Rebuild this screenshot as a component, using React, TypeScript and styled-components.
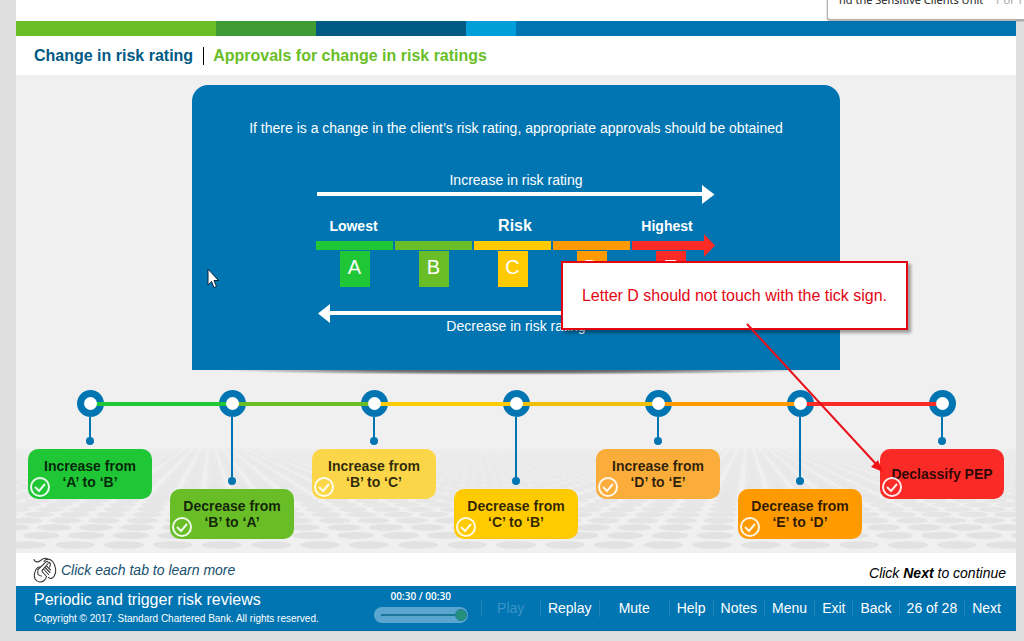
import React from 'react';
import styled, { createGlobalStyle } from 'styled-components';

const blue = '#0075b2';
const sans = '"Liberation Sans", Arial, sans-serif';

const GlobalStyle = createGlobalStyle`
  *, *::before, *::after { box-sizing: border-box; }
  body { margin: 0; background: #dedddf; font-family: ${sans}; overflow-x: hidden; }
  button { font: inherit; border: 0; padding: 0; background: none; color: inherit; cursor: pointer; }
  h1, h2, p { margin: 0; }
`;

const Page = styled.div`
  position: relative;
  padding: 0 8px 10px 16px;
  background: #dedede;
  overflow: hidden;
`;

const Course = styled.main`
  background: #fff;
  padding-top: 21px;
`;

const FindBar = styled.div`
  position: absolute;
  top: -12px;
  right: 0;
  z-index: 2;
  width: 197px;
  height: 32px;
  padding: 1px 0 0 11px;
  background: #fff;
  border: 1px solid #b0b0b0;
  border-right: 0;
  border-radius: 0 0 0 3px;
  box-shadow: 0 1px 2px rgba(0, 0, 0, 0.35);
  font: 11px/20px "Noto Sans", sans-serif;
  color: #222;
  white-space: nowrap;
  overflow: hidden;
`;

const MatchCount = styled.span`
  margin-left: 11px;
  color: #a5a5a5;
`;

const Stripe = styled.div`
  display: flex;
  height: 15px;
  background: ${blue};
`;

const StripePart = styled.span<{ $width: number; $color: string }>`
  width: ${p => p.$width}%;
  background: ${p => p.$color};
`;

const Header = styled.header`
  display: flex;
  align-items: center;
  height: 39px;
  padding: 0 18px;
`;

const Title = styled.h1`
  font-size: 16px;
  line-height: 18px;
  color: #005a84;
`;

const Subtitle = styled.h2`
  margin-left: 10px;
  padding-left: 9px;
  border-left: 1px solid #000;
  font-size: 16px;
  line-height: 18px;
  color: #69be28;
`;

const Stage = styled.section`
  position: relative;
  display: grid;
  background: #f0f0f0;
`;

const Floor = styled.svg`
  grid-area: 1 / 1;
  align-self: end;
  display: block;
  width: 100%;
  height: 120px;
`;

const StageContent = styled.div`
  grid-area: 1 / 1;
  min-width: 0;
  padding: 10px 3px 14px;
`;

const Panel = styled.section`
  display: flex;
  flex-direction: column;
  align-items: center;
  max-width: 648px;
  margin: 0 auto;
  padding: 35px 16px 36px;
  border-radius: 16px 16px 0 0;
  background: ${blue};
  color: #fff;
  font-size: 14px;
  line-height: 16px;
`;

const PanelShadow = styled.div`
  max-width: 648px;
  height: 5px;
  margin: 0 auto 15px;
  background: radial-gradient(ellipse 46% 100% at 50% 0, #555 0, #777 50%, rgba(160, 160, 160, 0) 100%);
`;

const Scale = styled.div`
  width: 400px;
  margin-top: 36px;
  text-align: center;
`;

const ArrowSvg = styled.svg<{ $top: number }>`
  display: block;
  width: 400px;
  height: 8px;
  margin-top: ${p => p.$top}px;
  overflow: visible;
`;

const ScaleLabels = styled.div`
  display: grid;
  grid-template-columns: 75px 248px 56px;
  align-items: baseline;
  height: 16px;
  margin-top: 20px;
  font-weight: bold;
`;

const RiskLabel = styled.span`
  font-size: 16px;
`;

const Grades = styled.div`
  display: grid;
  grid-template-columns: repeat(5, 77px);
  gap: 2px;
  margin-top: 7px;
`;

const Grade = styled.div`
  display: flex;
  flex-direction: column;
  align-items: center;
  gap: 1px;
`;

const GradeBar = styled.span<{ $color: string }>`
  width: 100%;
  height: 9px;
  background: ${p => p.$color};
`;

const GradeArrow = styled.svg`
  display: block;
  width: 100%;
  height: 9px;
  overflow: visible;
`;

const Letter = styled.span<{ $color: string }>`
  width: 30px;
  height: 36px;
  background: ${p => p.$color};
  font-size: 20px;
  line-height: 32px;
`;

const Timeline = styled.ol`
  display: grid;
  grid-template-columns: repeat(7, 1fr);
  align-items: start;
  margin: 0;
  padding: 0;
  list-style: none;
`;

const Step = styled.li`
  display: flex;
  flex-direction: column;
  align-items: center;
`;

const Node = styled.div`
  display: grid;
  place-items: center;
  width: 100%;
  > * { grid-area: 1 / 1; }
`;

const Ring = styled.span`
  width: 27px;
  height: 27px;
  border-radius: 50%;
  background: ${blue};
`;

const Rail = styled.span<{ $before: string; $after: string }>`
  width: 100%;
  height: 4px;
  background: linear-gradient(90deg, ${p => p.$before} 50%, ${p => p.$after} 50%);
`;

const Hole = styled.span`
  width: 13px;
  height: 13px;
  border-radius: 50%;
  background: #fff;
`;

const Stem = styled.span<{ $long: boolean }>`
  width: 2px;
  height: ${p => (p.$long ? 60 : 20)}px;
  background: ${blue};
`;

const StemDot = styled.span`
  width: 8px;
  height: 8px;
  margin-bottom: 4px;
  border-radius: 50%;
  background: ${blue};
`;

const Card = styled.button<{ $color: string }>`
  position: relative;
  width: 124px;
  height: 50px;
  border-radius: 10px;
  background: ${p => p.$color};
  color: rgba(0, 0, 0, 0.82);
  font-size: 14px;
  font-weight: bold;
  line-height: 16px;
  white-space: pre-line;
`;

const Tick = styled.svg`
  position: absolute;
  left: 2px;
  bottom: 2px;
  width: 20px;
  height: 20px;
`;

const Callout = styled.aside`
  position: absolute;
  top: 186px;
  left: calc(50% + 45px);
  width: 347px;
  padding: 24px 0 23px;
  border: 2px solid #e30613;
  background: #fff;
  box-shadow: 3px 3px 3px rgba(0, 0, 0, 0.35);
  color: #e30613;
  font-size: 16px;
  line-height: 18px;
  text-align: center;
`;

const Leader = styled.svg`
  position: absolute;
  top: 248px;
  left: calc(50% + 230px);
  width: 138px;
  height: 150px;
  pointer-events: none;
`;

const Pointer = styled.svg`
  position: absolute;
  top: 193px;
  left: calc(50% - 310px);
  width: 14px;
  height: 21px;
`;

const Hints = styled.div`
  display: flex;
  align-items: center;
  justify-content: space-between;
  height: 33px;
  padding: 0 10px 0 17px;
  font-size: 14px;
  font-style: italic;
`;

const Hint = styled.p`
  display: flex;
  align-items: center;
  gap: 4px;
  color: #17506f;
`;

const NextHint = styled.p`
  padding-top: 6px;
  color: #000;
`;

const Footer = styled.footer`
  display: flex;
  align-items: center;
  height: 45px;
  padding: 0 8px 0 18px;
  border-bottom: 1px solid #006aa6;
  background: ${blue};
  color: #fff;
`;

const Credits = styled.div`
  flex: 1;
  padding-top: 2px;
  font-size: 10px;
  line-height: 18px;
  white-space: nowrap;
`;

const CourseName = styled.p`
  font-size: 16px;
  line-height: 20px;
`;

const Seek = styled.label`
  display: flex;
  flex-direction: column;
  align-items: center;
  gap: 5px;
  width: 94px;
  margin: 0 13px 3px 0;
  font: 600 10px/12px "Open Sans", sans-serif;
`;

const SeekBar = styled.input`
  appearance: none;
  display: block;
  width: 94px;
  height: 16px;
  margin: 0;
  padding: 0 1px 0 7px;
  border-radius: 8px;
  background: #5ba6d1;
  &::-webkit-slider-runnable-track {
    height: 2px;
    background: #1b7797;
  }
  &::-webkit-slider-thumb {
    appearance: none;
    width: 12px;
    height: 12px;
    margin-top: -5px;
    border: 1px solid #1c7f93;
    border-radius: 50%;
    background: #27907c;
  }
`;

const Nav = styled.nav`
  display: flex;
  font-size: 14px;
  line-height: 17px;
`;

const NavItem = styled.button<{ $width?: number }>`
  width: ${p => (p.$width ? `${p.$width}px` : 'auto')};
  padding: 0 7px;
  border-left: 1px solid #2384bb;
  white-space: nowrap;
  &:disabled { color: #3c94c4; cursor: default; }
`;

const grades = [
  { letter: 'A', color: '#1fc636' },
  { letter: 'B', color: '#69be28' },
  { letter: 'C', color: '#ffcb00' },
  { letter: 'D', color: '#ff9a00' },
  { letter: 'E', color: '#fa2a26' },
];

const steps = [
  { label: 'Increase from\n‘A’ to ‘B’', color: '#1fc636', rail: '#1fc636' },
  { label: 'Decrease from\n‘B’ to ‘A’', color: '#69be28', rail: '#69be28' },
  { label: 'Increase from\n‘B’ to ‘C’', color: '#fad648', rail: '#fccb08' },
  { label: 'Decrease from\n‘C’ to ‘B’', color: '#ffcb00', rail: '#eebf0c' },
  { label: 'Increase from\n‘D’ to ‘E’', color: '#faad3a', rail: '#ff9a00' },
  { label: 'Decrease from\n‘E’ to ‘D’', color: '#ff9a00', rail: '#fa2a26' },
  { label: 'Declassify PEP', color: '#fa2a26', rail: 'transparent' },
];

const navItems: { label: string; width?: number; disabled?: boolean }[] = [
  { label: 'Play', width: 59, disabled: true },
  { label: 'Replay', width: 59 },
  { label: 'Mute', width: 70 },
  { label: 'Help' },
  { label: 'Notes' },
  { label: 'Menu' },
  { label: 'Exit' },
  { label: 'Back' },
  { label: '26 of 28' },
  { label: 'Next' },
];

// Rows of discs receding towards a horizon at y = 0.
function FloorPattern() {
  const discs: React.ReactNode[] = [];
  for (let row = 0; row < 60; row++) {
    const s = 1 / (1 + row * 0.0912);
    const pitch = 49 * s;
    const count = Math.ceil(540 / pitch);
    for (let i = -count; i <= count; i++) {
      discs.push(
        <ellipse
          key={`${row}:${i}`}
          cx={500 + (i + ((row * 0.43) % 1)) * pitch}
          cy={114 * s - 2}
          rx={20 * s}
          ry={3.8 * s}
          opacity={Math.min(1, Math.max(0, s * 1.4 - 0.2))}
        />,
      );
    }
  }
  return (
    <Floor viewBox="0 0 1000 120" preserveAspectRatio="xMidYMax slice" fill="#e2e2e3" aria-hidden="true">
      {discs}
    </Floor>
  );
}

// A hand resting on a corded mouse.
function HandIcon() {
  return (
    <svg width="24" height="26" viewBox="0 0 24 26" fill="none" stroke="#3a3a3a" strokeWidth="1.1" strokeLinecap="round" strokeLinejoin="round" aria-hidden="true">
      <path d="M1 2.500C2 5.500 5 5.500 7.500 3.500S12.500.5 14.500 2" />
      <path d="M11 4.500C12.500 1.500 17 1 20 5S23.500 15 21.500 18.500S17.500 22 15.500 20.500" />
      <path d="M16.500 5.500C17.500 6.500 17.500 8.500 16.500 10" />
      <path d="M4.500 13L13 4.800C14.500 3.600 16 5.200 15 6.500L9.500 13" />
      <path d="M7 10C4.500 9.500 2.500 12.500 1.500 16.500C.8 20.500 2 24.500 6.500 25C10 25.200 13 22.500 13.500 19.500" />
      <path d="M9.500 13C8.500 14 9 15 10 15.500L13.500 19.500M10.500 12L15.500 17.500M12 10.500L17 15.500M13.500 9L17.500 13" />
      <path d="M5 14C4 16.500 5.500 19 8.500 19" />
    </svg>
  );
}

export default function App() {
  return (
    <Page>
      <GlobalStyle />
      <FindBar>
        nd the Sensitive Clients Unit<MatchCount>1 of 1</MatchCount>
      </FindBar>
      <Course>
        <Stripe>
          <StripePart $width={20} $color="#69be28" />
          <StripePart $width={10} $color="#3f9c35" />
          <StripePart $width={15} $color="#005a84" />
          <StripePart $width={5} $color="#009fda" />
        </Stripe>
        <Header>
          <Title>Change in risk rating</Title>
          <Subtitle>Approvals for change in risk ratings</Subtitle>
        </Header>

        <Stage>
          <FloorPattern />
          <StageContent>
            <Panel>
              <p>If there is a change in the client’s risk rating, appropriate approvals should be obtained</p>
              <Scale>
                <p>Increase in risk rating</p>
                <ArrowSvg $top={2} fill="#fff" aria-hidden="true">
                  <path d="M1 2H386V-5L398.500 4.500L386 14V6H1Z" />
                </ArrowSvg>
                <ScaleLabels>
                  <span>Lowest</span>
                  <RiskLabel>Risk</RiskLabel>
                  <span>Highest</span>
                </ScaleLabels>
                <Grades>
                  {grades.map(g => (
                    <Grade key={g.letter}>
                      {g.letter === 'E' ? (
                        <GradeArrow fill={g.color} aria-hidden="true">
                          <path d="M0 0H72V-7L83 4.500L72 16V9H0Z" />
                        </GradeArrow>
                      ) : (
                        <GradeBar $color={g.color} />
                      )}
                      <Letter $color={g.color}>{g.letter}</Letter>
                    </Grade>
                  ))}
                </Grades>
                <ArrowSvg $top={23} fill="#fff" aria-hidden="true">
                  <path d="M400 1H14V-6L2 3.500L14 13V5H400Z" />
                </ArrowSvg>
                <p>Decrease in risk rating</p>
              </Scale>
            </Panel>
            <PanelShadow />
            <Timeline>
              {steps.map((s, i) => (
                <Step key={s.label}>
                  <Node>
                    <Ring />
                    <Rail $before={i ? steps[i - 1].rail : 'transparent'} $after={s.rail} />
                    <Hole />
                  </Node>
                  <Stem $long={i % 2 === 1} />
                  <StemDot />
                  <Card type="button" $color={s.color}>
                    {s.label}
                    <Tick viewBox="0 0 20 20" fill="none" stroke="#fff" strokeOpacity="0.9" aria-hidden="true">
                      <circle cx="10" cy="10" r="9" strokeWidth="2" />
                      <path d="M5 10l4 4 6-7" strokeWidth="2" />
                    </Tick>
                  </Card>
                </Step>
              ))}
            </Timeline>
          </StageContent>
          <Pointer viewBox="0 0 14 21" aria-hidden="true">
            <path d="M2 1V17L5.500 13.500L8 19.500L10.500 18.500L8 12.500H12.500Z" fill="#fff" stroke="#08243c" />
          </Pointer>
          <Callout>Letter D should not touch with the tick sign.</Callout>
          <Leader viewBox="0 0 138 150" fill="#f01018" aria-hidden="true">
            <path d="M1 1L130 141" stroke="#e8101a" strokeWidth="2" />
            <path d="M137 149L125 144L132 137Z" />
          </Leader>
        </Stage>

        <Hints>
          <Hint>
            <HandIcon />
            Click each tab to learn more
          </Hint>
          <NextHint>
            Click <b>Next</b> to continue
          </NextHint>
        </Hints>

        <Footer>
          <Credits>
            <CourseName>Periodic and trigger risk reviews</CourseName>
            <p>Copyright © 2017. Standard Chartered Bank. All rights reserved.</p>
          </Credits>
          <Seek>
            00:30 / 00:30
            <SeekBar type="range" min={0} max={30} defaultValue={30} />
          </Seek>
          <Nav>
            {navItems.map(n => (
              <NavItem key={n.label} type="button" $width={n.width} disabled={n.disabled}>
                {n.label}
              </NavItem>
            ))}
          </Nav>
        </Footer>
      </Course>
    </Page>
  );
}
